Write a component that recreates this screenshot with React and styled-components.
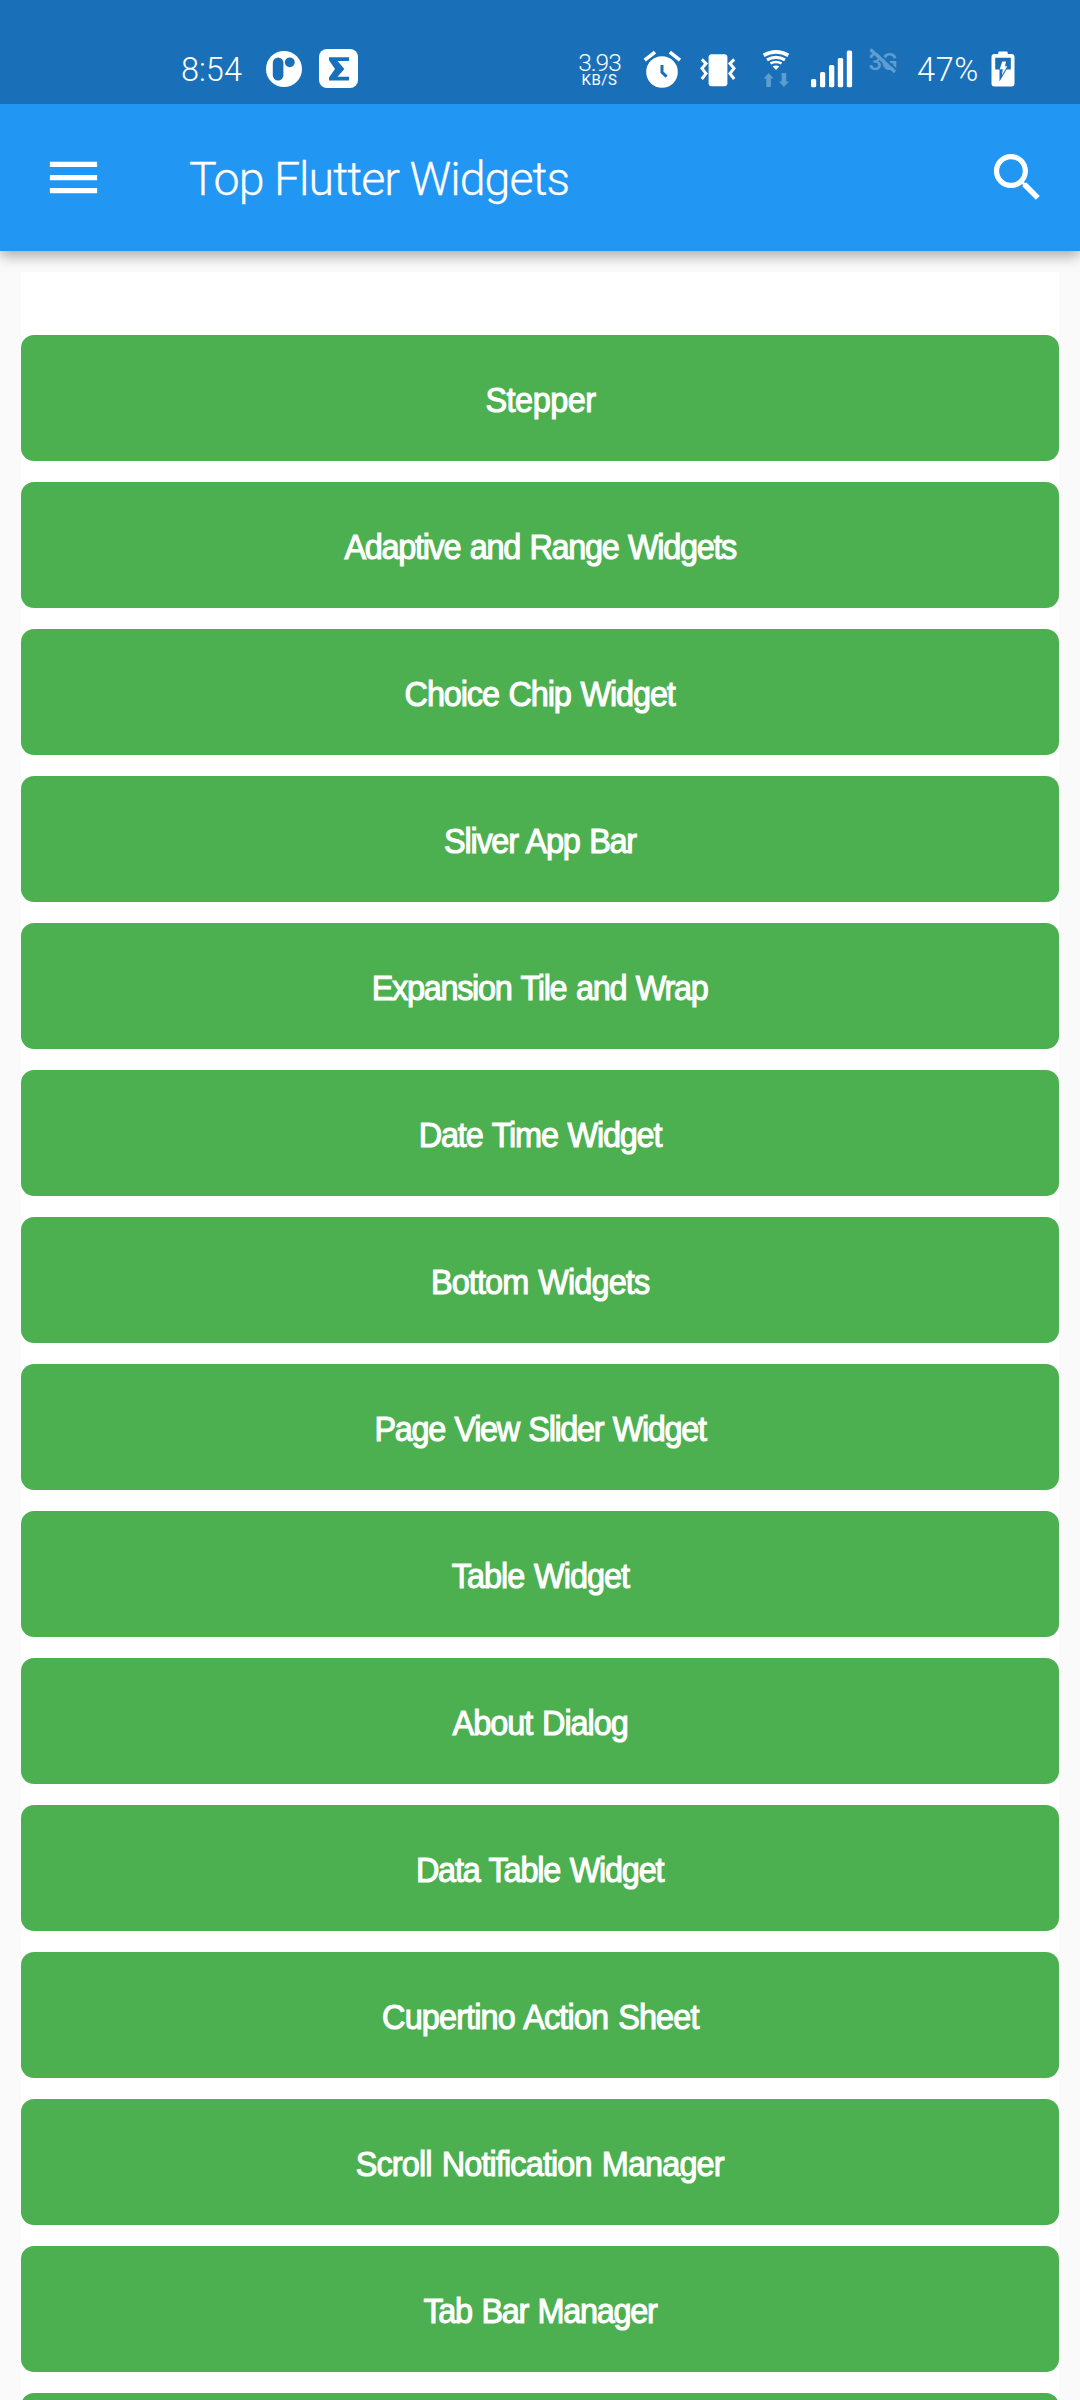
import React from "react";
import styled, { createGlobalStyle } from "styled-components";

const GlobalStyle = createGlobalStyle`
  html, body { margin: 0; padding: 0; background: #fafafa; }
  *, *::before, *::after { box-sizing: border-box; }
`;

const Screen = styled.div`
  width: 1080px;
  height: 2400px;
  overflow: hidden;
  display: flex;
  flex-direction: column;
  background: #fafafa;
  color: #fff;
  font-family: "Liberation Sans", Arial, sans-serif;
`;

const StatusBar = styled.header`
  flex: none;
  height: 104px;
  padding: 34px 65px 0 181px;
  display: flex;
  align-items: center;
  justify-content: space-between;
  background: #1a70b8;
  z-index: 2;
`;

const StatusGroup = styled.div`
  display: flex;
  align-items: center;
`;

const StatusText = styled.span`
  width: ${(p) => p.$width}px;
  padding-top: 2px;
  font-family: Roboto, sans-serif;
  font-weight: 300;
  font-size: 32.5px;
  line-height: 40px;
  letter-spacing: ${(p) => p.$tracking || 0}px;
  white-space: nowrap;
`;

const NetSpeed = styled.div`
  width: 45px;
  display: flex;
  flex-direction: column;
  align-items: center;
  font-family: Roboto, sans-serif;
  font-weight: 300;
  white-space: nowrap;
`;

const SpeedValue = styled.span`
  font-size: 24.5px;
  line-height: 22px;
  letter-spacing: -1px;
`;

const SpeedUnit = styled.span`
  font-size: 15px;
  line-height: 13px;
  letter-spacing: 0.5px;
  font-weight: 400;
`;

const Glyph = styled.svg`
  flex: none;
  display: block;
  overflow: visible;
  margin-left: ${(p) => p.$gap || 0}px;
`;

const Percent = styled.div`
  display: flex;
  margin-left: 18px;
`;

const AppBar = styled.nav`
  flex: none;
  height: 147px;
  padding: 0 31.5px 0 42px;
  display: flex;
  align-items: center;
  background: #2196f3;
  box-shadow: 0 4px 14px rgba(0, 0, 0, 0.36);
  z-index: 1;
`;

const IconButton = styled.button`
  flex: none;
  width: 63px;
  height: 63px;
  padding: 0;
  border: 0;
  background: none;
  color: inherit;
`;

const Title = styled.h1`
  flex: 1;
  margin: 0 0 0 84px;
  padding-top: 2px;
  font-family: Roboto, sans-serif;
  font-weight: 300;
  font-size: 46.5px;
  line-height: 60px;
  letter-spacing: -0.95px;
  -webkit-text-stroke: 0.3px #fff;
  white-space: nowrap;
`;

const List = styled.main`
  flex: none;
  margin: 21px 21px 0;
  padding-top: 63px;
  display: flex;
  flex-direction: column;
  gap: 21px;
  background: #fff;
`;

const Tile = styled.button`
  flex: none;
  height: 126px;
  padding: 4px 0 0;
  border: 0;
  border-radius: 13px;
  display: flex;
  align-items: center;
  justify-content: center;
  background: #4caf50;
  color: #fff;
  font-family: inherit;
`;

const TileLabel = styled.span`
  font-size: 34.5px;
  line-height: 42px;
  letter-spacing: ${(p) => p.$tracking}px;
  word-spacing: 2px;
  transform: scaleX(0.94);
  -webkit-text-stroke: 1.1px #fff;
  white-space: nowrap;
`;

const items = [
  ["Stepper", -0.55],
  ["Adaptive and Range Widgets", -1.4],
  ["Choice Chip Widget", -1.2],
  ["Sliver App Bar", -1.33],
  ["Expansion Tile and Wrap", -1.38],
  ["Date Time Widget", -1.26],
  ["Bottom Widgets", -0.95],
  ["Page View Slider Widget", -1.43],
  ["Table Widget", -1.06],
  ["About Dialog", -1.1],
  ["Data Table Widget", -1.3],
  ["Cupertino Action Sheet", -0.92],
  ["Scroll Notification Manager", -0.92],
  ["Tab Bar Manager", -1.38],
  ["", 0],
];

const BG = "#1a70b8";
const DIM = "#5f9dd1";

const NotificationDot = () => (
  <Glyph $gap={22} width="38" height="38" viewBox="0 0 38 38">
    <circle cx="19" cy="19" r="18" fill="#fff" />
    <rect x="7.8" y="7.4" width="10.6" height="23.2" rx="5.3" fill={BG} />
    <circle cx="24.8" cy="12.3" r="4.9" fill={BG} />
  </Glyph>
);

const SigmaBadge = () => (
  <Glyph $gap={16} width="39" height="40" viewBox="0 0 39 40">
    <rect width="39" height="39" rx="8" fill="#fff" />
    <path
      d="M10 8.3H30V12H18.5L25.4 19.9 18.5 27.8H30V31.5H10V28.6L16 19.9 10 11.2z"
      fill={BG}
    />
  </Glyph>
);

const Alarm = () => (
  <Glyph $gap={21} width="38" height="38" viewBox="0 0 38 38">
    <circle cx="19" cy="22" r="15.8" fill="#fff" />
    <path d="M1.7 10.2L12 2.2M26.8 2.2L37 10.2" stroke="#fff" strokeWidth="3.6" />
    <path d="M19 15v7.3l4.6 4.4" fill="none" stroke={BG} strokeWidth="3" />
  </Glyph>
);

const Vibrate = () => (
  <Glyph $gap={19} width="36" height="36" viewBox="0 -2.2 36 36">
    <rect x="8.6" y="1" width="18.8" height="32" rx="3" fill="#fff" />
    <path
      d="M1.8 6.2L6 10.4 2 15.2 6 20.4 1.8 25.8M34.2 6.2L30 10.4 34 15.2 30 20.4 34.2 25.8"
      fill="none"
      stroke="#fff"
      strokeWidth="3"
    />
  </Glyph>
);

const Wifi = () => (
  <Glyph $gap={26} width="28" height="38" viewBox="0 0 28 38">
    <g fill="none" stroke="#fff">
      <path d="M1.7 5.4Q14 -1.6 26.3 5.4" strokeWidth="3.6" />
      <path d="M5 9.9Q14 5 23 9.9" strokeWidth="3.3" />
      <path d="M8.4 13.4Q14 10.6 19.6 13.4" strokeWidth="2.6" />
    </g>
    <path d="M10.6 16.2Q14 14.6 17.4 16.2L14 20z" fill="#fff" />
    <path d="M6.6 23l5 5.4H8.9V37H4.3v-8.6H1.6zM19.6 23h4.6v8.6H27L21.9 37l-5-5.4h2.7z" fill={DIM} />
  </Glyph>
);

const Signal = () => (
  <Glyph $gap={21} width="42" height="38" viewBox="0 0 42 38">
    <g fill="#fff">
      <rect x="0" y="29" width="5.2" height="8.3" rx="1.6" />
      <rect x="9" y="22" width="5.2" height="15.3" rx="1.6" />
      <rect x="18" y="15" width="5.3" height="22.3" rx="1.6" />
      <rect x="26.8" y="8" width="5.4" height="29.3" rx="1.6" />
      <rect x="35.8" y="0.5" width="5.3" height="36.8" rx="1.6" />
    </g>
  </Glyph>
);

const NoData = () => (
  <Glyph $gap={16} width="30" height="40" viewBox="0 0 30 40">
    <text
      x="-0.5"
      y="20.6"
      fontFamily="Roboto, sans-serif"
      fontSize="24"
      fontWeight="500"
      letterSpacing="-0.8"
      fill={DIM}
    >
      3G
    </text>
    <path d="M4.2 -0.8L29 22" stroke={BG} strokeWidth="1.8" />
    <path d="M1.5 0.5L26 23" stroke={DIM} strokeWidth="3.2" />
  </Glyph>
);

const Battery = () => (
  <Glyph $gap={11} width="24" height="36" viewBox="0 0 24 36">
    <path
      d="M8.3 0.5h7.4q1 0 1 1V3h3.8q3 0 3 3v26.5q0 3-3 3h-17q-3 0-3-3V6q0-3 3-3h3.8V1.5q0-1 1-1z"
      fill="#fff"
    />
    <path d="M4.2 6.8H19.8V18.5H15.6L8.5 30.5V18.5H4.2z" fill={BG} />
    <path d="M11.2 10.5h3.8l-1 4.7h2.3l-5.5 9.3 1-6.3H8.8z" fill="#fff" />
  </Glyph>
);

export default function App() {
  return (
    <>
      <GlobalStyle />
      <Screen>
        <StatusBar>
          <StatusGroup>
            <StatusText $width={62}>8:54</StatusText>
            <NotificationDot />
            <SigmaBadge />
          </StatusGroup>
          <StatusGroup>
            <NetSpeed>
              <SpeedValue>3.93</SpeedValue>
              <SpeedUnit>KB/S</SpeedUnit>
            </NetSpeed>
            <Alarm />
            <Vibrate />
            <Wifi />
            <Signal />
            <NoData />
            <Percent>
              <StatusText $width={63} $tracking={0.6}>47%</StatusText>
            </Percent>
            <Battery />
          </StatusGroup>
        </StatusBar>
        <AppBar>
          <IconButton aria-label="Menu">
            <Glyph width="63" height="63" viewBox="0 0 24 24" fill="#fff">
              <path d="M3 18h18v-2H3v2zm0-5h18v-2H3v2zm0-7v2h18V6H3z" />
            </Glyph>
          </IconButton>
          <Title>Top Flutter Widgets</Title>
          <IconButton aria-label="Search">
            <Glyph width="63" height="63" viewBox="0 0 24 24" fill="#fff">
              <path d="M15.5 14h-.79l-.28-.27C15.41 12.59 16 11.11 16 9.5 16 5.91 13.09 3 9.5 3S3 5.91 3 9.5 5.91 16 9.5 16c1.61 0 3.09-.59 4.23-1.57l.27.28v.79l5 4.99L20.49 19l-4.99-5zm-6 0C7.01 14 5 11.99 5 9.5S7.01 5 9.5 5 14 7.01 14 9.5 11.99 14 9.5 14z" />
            </Glyph>
          </IconButton>
        </AppBar>
        <List>
          {items.map(([label, tracking], i) => (
            <Tile key={i}>
              <TileLabel $tracking={tracking}>{label}</TileLabel>
            </Tile>
          ))}
        </List>
      </Screen>
    </>
  );
}
